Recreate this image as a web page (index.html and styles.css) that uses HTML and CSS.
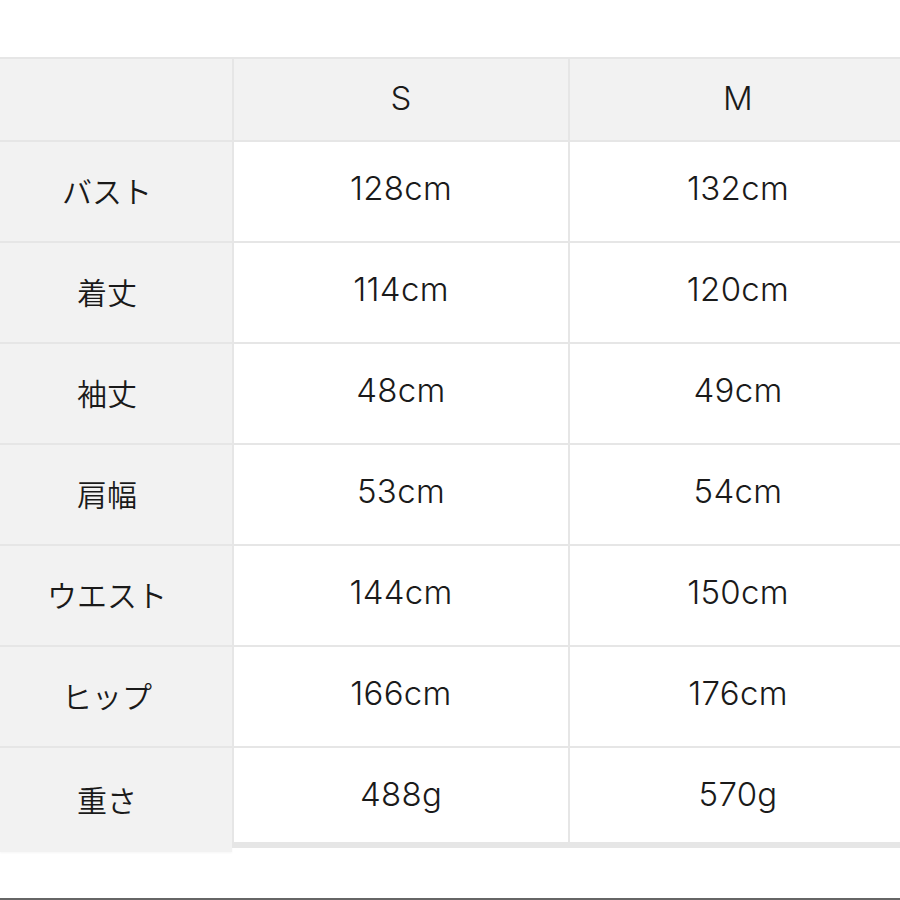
FILE: index.html
```html
<!DOCTYPE html>
<html lang="ja">
<head>
<meta charset="utf-8">
<link rel="stylesheet" href="styles.css">
</head>
<body>
<div class="page">
  <div class="size-table">
    <div class="cell head label"></div>
    <div class="cell head col">S</div>
    <div class="cell head col">M</div>

    <div class="cell label">バスト</div>
    <div class="cell col">128cm</div>
    <div class="cell col">132cm</div>

    <div class="cell label">着丈</div>
    <div class="cell col">114cm</div>
    <div class="cell col">120cm</div>

    <div class="cell label">袖丈</div>
    <div class="cell col">48cm</div>
    <div class="cell col">49cm</div>

    <div class="cell label">肩幅</div>
    <div class="cell col">53cm</div>
    <div class="cell col">54cm</div>

    <div class="cell label">ウエスト</div>
    <div class="cell col">144cm</div>
    <div class="cell col">150cm</div>

    <div class="cell label">ヒップ</div>
    <div class="cell col">166cm</div>
    <div class="cell col">176cm</div>

    <div class="cell label last">重さ</div>
    <div class="cell col last">488g</div>
    <div class="cell col last">570g</div>
  </div>
  <div class="bottom-rule"></div>
</div>
</body>
</html>
```

FILE: styles.css
```css
html, body {
  margin: 0;
  padding: 0;
  background: #ffffff;
}

.page {
  width: 900px;
  height: 900px;
  overflow: hidden;
  padding-top: 57px;
  box-sizing: border-box;
  display: flex;
  flex-direction: column;
  font-family: "Noto Sans CJK JP", "Noto Sans", sans-serif;
  color: #1a1a1a;
}

.size-table {
  display: grid;
  grid-template-columns: 232px 336px 338px;
  grid-auto-rows: 101px;
  grid-template-rows: 83px;
}

.cell {
  box-sizing: border-box;
  border-top: 2px solid #e6e6e6;
  display: flex;
  align-items: center;
  justify-content: center;
  padding-bottom: 6px;
  line-height: 1;
  background: #ffffff;
}

.cell.label {
  font-size: 30px;
  font-weight: 350;
  padding-right: 18px;
  padding-bottom: 4px;
  background: #f2f2f2;
}

.cell.col {
  border-left: 2px solid #e6e6e6;
  font-family: "Inter", "Noto Sans CJK JP", sans-serif;
  font-size: 33px;
  font-weight: 350;
  letter-spacing: 0.3px;
}

.cell.head {
  background: #f2f2f2;
  padding-bottom: 2px;
}

.cell.label.last {
  height: 106px;
  padding-bottom: 2px;
  box-shadow: 0 1px 2px rgba(0, 0, 0, 0.04);
}

.cell.col.last {
  align-self: start;
  height: 102px;
  padding-bottom: 2px;
  border-bottom: 6px solid #e6e6e6;
}

.bottom-rule {
  margin-top: auto;
  height: 2px;
  background: #666666;
}
```
